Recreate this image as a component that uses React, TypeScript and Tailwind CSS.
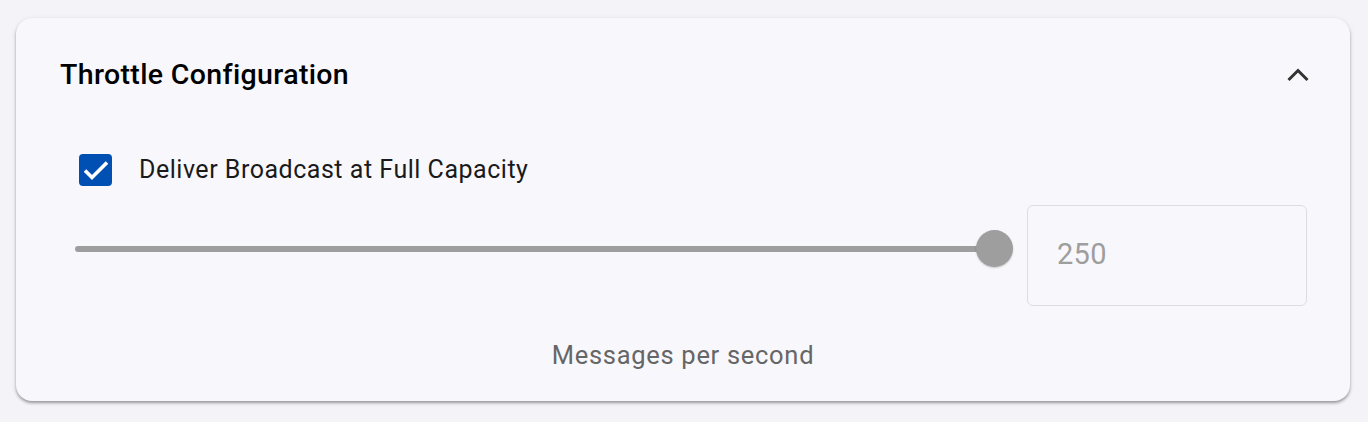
import { useState } from 'react';

export default function App() {
    const [full, setFull] = useState(true);
    const [open, setOpen] = useState(true);

    return (
        <div className="min-h-[422px] bg-[#f4f4f8] px-4 pt-[18px]" style={{ fontFamily: 'Roboto, "Noto Sans", sans-serif' }}>
            <div className="w-[1334px] rounded-2xl bg-[#f8f8fc] shadow-[0_2px_3px_rgba(0,0,0,0.35),0_1px_6px_rgba(0,0,0,0.06)]">
                <div className="flex h-[114px] items-center justify-between pl-[44px] pr-[36px]">
                    <h2 className="text-[28.5px] font-medium tracking-[0.35px] text-black">Throttle Configuration</h2>
                    <button type="button" onClick={() => setOpen(!open)} className="flex h-8 w-8 items-center justify-center">
                        <svg width="22" height="14" viewBox="0 0 22 14" fill="none">
                            <path d="M1.5 12 L11 2.5 L20.5 12" stroke="#333" strokeWidth="3" />
                        </svg>
                    </button>
                </div>

                {open && (
                    <div className="pb-[27px] pl-[59px] pr-[43px] pt-[19px]">
                        <label className="flex cursor-pointer items-center gap-[27px] pl-[4px]">
                            <span
                                onClick={() => setFull(!full)}
                                className={`flex h-[32px] w-[33px] items-center justify-center rounded-[4px] ${full ? 'bg-[#0050b4]' : 'border-2 border-gray-500'}`}
                            >
                                {full && (
                                    <svg width="28" height="22" viewBox="0 0 28 22" fill="none">
                                        <path d="M3 11.5 L10 18.5 L25 3.5" stroke="white" strokeWidth="3.6" />
                                    </svg>
                                )}
                            </span>
                            <span className="text-[25px] tracking-[0.52px] text-[#1a1a1a]">Deliver Broadcast at Full Capacity</span>
                        </label>

                        <div className="mt-[16px] flex items-center gap-[14px]">
                            <div className="relative mb-[13px] flex h-[40px] flex-1 items-center">
                                <div className="h-[6px] w-full rounded-full bg-[#9e9e9e]" />
                                <div className="absolute right-[-18px] h-[37px] w-[37px] rounded-full bg-[#9e9e9e] shadow-[0_1px_2px_rgba(0,0,0,0.2)]" />
                            </div>
                            <div className="ml-[18px] flex h-[101px] w-[280px] items-center rounded-[6px] border border-[#dcdce2] px-[29px]">
                                <span className="text-[29px] tracking-[0.3px] text-[#9e9e9e]">250</span>
                            </div>
                        </div>

                        <p className="mt-[30px] pr-[16px] text-center text-[25.5px] tracking-[0.7px] text-[#666]">Messages per second</p>
                    </div>
                )}
            </div>
        </div>
    );
}
